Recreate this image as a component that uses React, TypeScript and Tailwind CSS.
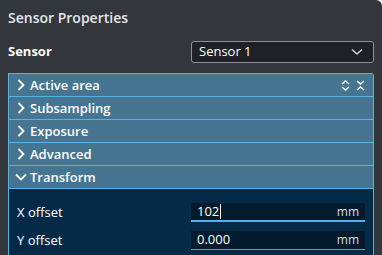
import React from "react";

const Chevron = ({ dir }: { dir: "right" | "down" }) => (
  <div className="w-[12px] h-[12px] flex items-center justify-center shrink-0">
    {dir === "right" ? (
      <svg width="8" height="12" viewBox="0 0 8 12">
        <path d="M1.5 1 L6.5 6 L1.5 11" fill="none" stroke="white" strokeWidth="1.8" />
      </svg>
    ) : (
      <svg width="12" height="8" viewBox="0 0 12 8">
        <path d="M1 1.5 L6 6.5 L11 1.5" fill="none" stroke="white" strokeWidth="1.8" />
      </svg>
    )}
  </div>
);

const Header = ({ title, open, icons }: { title: string; open?: boolean; icons?: boolean }) => (
  <div className="h-[23px] border-t border-[#55b3e8] bg-[#457591] flex items-center pl-[6px] pr-[8px]">
    <Chevron dir={open ? "down" : "right"} />
    <span className="ml-[3px] text-[13px] font-semibold text-white leading-none">{title}</span>
    {icons && (
      <div className="ml-auto flex items-center gap-[6px]">
        <svg width="9" height="11" viewBox="0 0 9 11">
          <path d="M1 4 L4.5 1 L8 4 M1 7 L4.5 10 L8 7" fill="none" stroke="white" strokeWidth="1.4" />
        </svg>
        <svg width="9" height="11" viewBox="0 0 9 11">
          <path d="M1 1 L4.5 4 L8 1 M1 10 L4.5 7 L8 10" fill="none" stroke="white" strokeWidth="1.4" />
        </svg>
      </div>
    )}
  </div>
);

const Field = ({ label, value, focused }: { label: string; value: string; focused?: boolean }) => (
  <div className="flex items-center h-[19px]">
    <div className="w-[182px] pl-[8px] text-[13px] text-white">{label}</div>
    <div
      className={`w-[174px] h-[19px] bg-[#041a2e] flex items-center px-[6px] ${
        focused ? "border-b-2 border-[#4fb4ec]" : "border-b border-[#8a96a2]"
      }`}
    >
      <span className="text-[13px] text-white">{value}</span>
      {focused && <span className="w-px h-[15px] bg-white ml-[1px]" />}
      <span className="ml-auto text-[12px] text-[#d8dde2]">mm</span>
    </div>
  </div>
);

export default function App() {
  return (
    <div
      className="w-[382px] h-[255px] overflow-hidden bg-[#33363b] rounded-tr-[6px]"
      style={{ fontFamily: '"Open Sans", "Noto Sans", sans-serif' }}
    >
      <div className="pt-[8px] px-[8px] h-[41px]">
        <div className="text-[14px] font-semibold leading-[20px] text-[#e4e6e8]">Sensor Properties</div>
      </div>
      <div className="flex items-center h-[22px] px-[8px]">
        <div className="w-[183px] text-[13px] font-bold text-white">Sensor</div>
        <div className="w-[183px] h-[22px] bg-[#1f2125] border border-[#8d9196] rounded-[3px] flex items-center pl-[7px] pr-[10px]">
          <span className="text-[13px] text-white">Sensor 1</span>
          <svg className="ml-auto" width="12" height="8" viewBox="0 0 12 8">
            <path d="M1 1.5 L6 6 L11 1.5" fill="none" stroke="#c8ccd0" strokeWidth="1.6" />
          </svg>
        </div>
      </div>
      <div className="mt-[10px] ml-[8px] w-[366px] border-x border-[#55b3e8] rounded-tr-[3px] overflow-hidden">
        <Header title="Active area" icons />
        <Header title="Subsampling" />
        <Header title="Exposure" />
        <Header title="Advanced" />
        <Header title="Transform" open />
        <div className="border-t border-[#55b3e8] bg-[#052a48] pt-[14px] pb-[20px] flex flex-col gap-[9px]">
          <Field label="X offset" value="102" focused />
          <Field label="Y offset" value="0.000" />
        </div>
      </div>
    </div>
  );
}
